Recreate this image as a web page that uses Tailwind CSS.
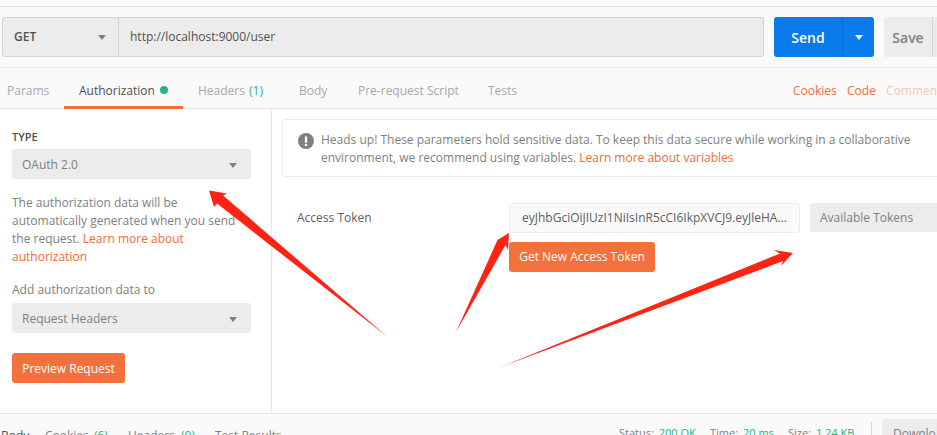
<!DOCTYPE html>
<html lang="en">
<head>
    <meta charset="UTF-8">
    <title>Postman</title>
    <script src="https://cdn.jsdelivr.net/npm/@tailwindcss/browser@4"></script>
</head>
<body class="relative w-[937px] h-[435px] overflow-hidden bg-white font-['Open_Sans',sans-serif] text-[12px] text-[#808080]">
    <div class="h-[7px] bg-[#fafafa] border-b border-[#e6e6e6]"></div>

    <!-- request bar -->
    <div class="h-[61px] bg-[#fafafa] border-b border-[#e6e6e6] flex pl-[2px] pt-[10px] w-[937px] overflow-hidden">
        <div class="w-[116px] h-[40px] shrink-0 bg-[#ececec] border border-[#d4d4d4] border-r-0 rounded-l-[3px] flex items-center justify-between pl-[11px] pr-[12px] text-[#505050] font-semibold text-[12px]">
            <span>GET</span>
            <svg width="8" height="5" viewBox="0 0 8 5"><path d="M0 0h8L4 5z" fill="#808080"/></svg>
        </div>
        <div class="w-[646px] h-[40px] shrink-0 bg-[#ececec] border border-[#d4d4d4] rounded-r-[2px] flex items-center pl-[11px] text-[#505050] text-[12px]">http://localhost:9000/user</div>
        <div class="ml-[10px] w-[100px] h-[40px] shrink-0 bg-[#097bed] rounded-[3px] flex text-white font-semibold text-[14px]">
            <div class="w-[69px] flex items-center justify-center border-r border-[#0a6fd6]">Send</div>
            <div class="flex-1 flex items-center justify-center">
                <svg width="8" height="5" viewBox="0 0 8 5"><path d="M0 0h8L4 5z" fill="#fff"/></svg>
            </div>
        </div>
        <div class="ml-[10px] w-[60px] h-[40px] shrink-0 bg-[#ececec] rounded-[3px] flex text-[#808080] font-semibold text-[14px]">
            <div class="w-[49px] flex items-center justify-center border-r border-[#d4d4d4]">Save</div>
        </div>
    </div>

    <!-- tabs -->
    <div class="h-[41px] bg-[#fafafa] border-b border-[#e6e6e6] flex items-center relative text-[12px] text-[#a8a8a8]">
        <span class="absolute left-[7px] top-[14px]">Params</span>
        <span class="absolute left-[79px] top-[14px] text-[#505050]">Authorization</span>
        <span class="absolute left-[160px] top-[18px] w-[8px] h-[8px] rounded-full bg-[#26b47f]"></span>
        <div class="absolute left-[64px] bottom-[-1px] w-[119px] h-[3px] bg-[#f26b3a]"></div>
        <span class="absolute left-[198px] top-[14px]">Headers <span class="text-[#26b47f] ml-[1px]">(1)</span></span>
        <span class="absolute left-[299px] top-[14px]">Body</span>
        <span class="absolute left-[358px] top-[14px]">Pre-request Script</span>
        <span class="absolute left-[488px] top-[14px]">Tests</span>
        <span class="absolute left-[793px] top-[14px] text-[#f26b3a]">Cookies</span>
        <span class="absolute left-[847px] top-[14px] text-[#f26b3a]">Code</span>
        <span class="absolute left-[886px] top-[14px] text-[#fcc4b0]">Comments</span>
    </div>

    <!-- body -->
    <div class="h-[305px] flex border-b border-[#e6e6e6]">
        <div class="w-[272px] shrink-0 border-r border-[#e6e6e6] pl-[12px] pr-[20px] pt-[20px]">
            <div class="text-[11px] font-semibold text-[#505050] leading-[16px]">TYPE</div>
            <div class="mt-[4px] h-[30px] w-[239px] bg-[#ececec] rounded-[3px] flex items-center justify-between pl-[10px] pr-[14px] pt-[2px]">
                <span>OAuth 2.0</span>
                <svg width="8" height="5" viewBox="0 0 8 5"><path d="M0 0h8L4 5z" fill="#808080"/></svg>
            </div>
            <p class="mt-[15px] w-[239px] leading-[18px]">The authorization data will be automatically generated when you send the request. <span class="text-[#f26b3a]">Learn more about authorization</span></p>
            <div class="mt-[15px] leading-[18px]">Add authorization data to</div>
            <div class="mt-[4px] h-[30px] w-[239px] bg-[#ececec] rounded-[3px] flex items-center justify-between pl-[10px] pr-[14px] pt-[2px]">
                <span>Request Headers</span>
                <svg width="8" height="5" viewBox="0 0 8 5"><path d="M0 0h8L4 5z" fill="#808080"/></svg>
            </div>
            <div class="mt-[20px] h-[30px] w-[113px] bg-[#f4703c] rounded-[3px] flex items-center justify-center pt-[2px] text-white font-medium">Preview Request</div>
        </div>
        <div class="flex-1 pl-[10px] pt-[10px] min-w-0">
            <div class="w-[670px] h-[58px] border border-[#ececec] rounded-[3px] flex pl-[15px] pt-[11px] leading-[18px]">
                <svg class="shrink-0 mt-[2px]" width="16" height="16" viewBox="0 0 14 14"><circle cx="7" cy="7" r="7" fill="#808080"/><rect x="6" y="3" width="2" height="5.5" fill="#fff"/><rect x="6" y="9.5" width="2" height="2" fill="#fff"/></svg>
                <p class="ml-[7px] w-[610px]">Heads up! These parameters hold sensitive data. To keep this data secure while working in a collaborative environment, we recommend using variables. <span class="text-[#f26b3a]">Learn more about variables</span></p>
            </div>
            <div class="flex mt-[26px]">
                <div class="w-[227px] pl-[15px] leading-[30px] text-[#606060] shrink-0">Access Token</div>
                <div class="shrink-0">
                    <div class="w-[291px] h-[30px] bg-[#fafafa] border border-[#ececec] rounded-[3px] flex items-center pl-[12px] text-[#606060] whitespace-nowrap">eyJhbGciOiJIUzI1NiIsInR5cCI6IkpXVCJ9.eyJleHA...</div>
                    <div class="mt-[9px] w-[146px] h-[30px] bg-[#f4703c] rounded-[3px] flex items-center justify-center text-white font-medium">Get New Access Token</div>
                </div>
                <div class="ml-[10px] w-[140px] h-[29px] bg-[#ececec] rounded-[3px] flex items-center pl-[10px] shrink-0">Available Tokens</div>
            </div>
        </div>
    </div>

    <!-- response bar -->
    <div class="relative h-[30px] bg-[#fafafa] text-[12px] text-[#808080]">
        <span class="absolute left-[1px] top-[13px] text-[#505050]">Body</span>
        <span class="absolute left-[45px] top-[13px]">Cookies <span class="text-[#26b47f] ml-[2px]">(6)</span></span>
        <span class="absolute left-[128px] top-[13px]">Headers <span class="text-[#26b47f] ml-[3px]">(9)</span></span>
        <span class="absolute left-[215px] top-[13px]">Test Results</span>
        <span class="absolute left-[619px] top-[11px] text-[11px]">Status: <span class="text-[#26b47f] ml-[2px]">200 OK</span></span>
        <span class="absolute left-[710px] top-[11px] text-[11px]">Time: <span class="text-[#26b47f] ml-[2px]">20 ms</span></span>
        <span class="absolute left-[788px] top-[11px] text-[11px]">Size: <span class="text-[#26b47f] ml-[2px]">1.24 KB</span></span>
        <div class="absolute left-[871px] top-[8px] w-px h-[22px] bg-[#d8d8d8]"></div>
        <div class="absolute left-[882px] top-[5px] w-[80px] h-[30px] bg-[#ececec] rounded-[3px] pl-[11px] pt-[6px]">Download</div>
    </div>

    <!-- red arrows drawn on the screenshot -->
    <svg class="absolute left-0 top-0 pointer-events-none" width="937" height="435" viewBox="0 0 937 435">
        <path d="M209 190.5L227 193.5L223 195.5L387 336.5L217 203.5L214 207z" fill="#ff2314"/>
        <path d="M509 233L508 250L505.5 245L456 332L497.5 240L494 242z" fill="#ff2314"/>
        <path d="M793 253L781 266L783 261L498 368L780 253.5L774 250z" fill="#ff2314"/>
    </svg>
</body>
</html>
